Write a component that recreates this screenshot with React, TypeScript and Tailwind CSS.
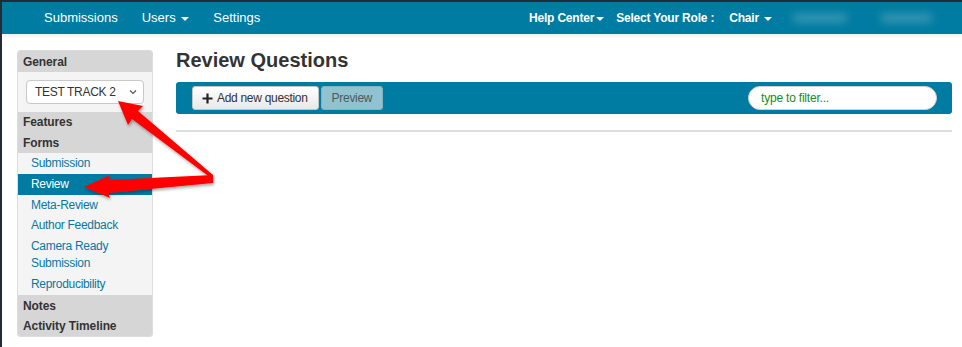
import React from "react";

const headers = "bg-[#d6d6d6] px-[5px] text-[12px] font-bold tracking-[-0.1px] text-[#333]";
const link = "px-[13px] text-[12px] tracking-[-0.3px] leading-[17px] text-[#0a77a1]";

function Caret() {
  return <span className="ml-[2px] inline-block border-x-[4px] border-t-[4px] border-x-transparent border-t-white align-middle" />;
}

function Arrows() {
  return (
    <svg className="pointer-events-none absolute left-0 top-0" width="962" height="347">
      <defs>
        <filter id="sh" x="-20%" y="-20%" width="140%" height="140%">
          <feDropShadow dx="1" dy="2" stdDeviation="1.5" floodColor="#000" floodOpacity="0.35" />
        </filter>
      </defs>
      <g filter="url(#sh)" fill="#ff0000">
        <polygon points="116,99 141,104 136,109 211,173 209,176 130,117 126,123" />
        <polygon points="82,185 108,173 106,178 211,173 211,181 106,191 108,196" />
      </g>
    </svg>
  );
}

export default function App() {
  return (
    <div
      className="relative flex h-[347px] w-[962px] flex-col overflow-hidden border-l-2 border-t-2 border-[#232b38] bg-white"
      style={{ fontFamily: '"Liberation Sans", Arial, sans-serif' }}
    >
      <nav className="flex h-[32px] shrink-0 items-center bg-[#007ba1] text-[13px] text-white shadow-[0_2px_4px_rgba(0,0,0,0.08)]">
        <div className="ml-[42px] flex items-center gap-[24px]">
          <span>Submissions</span>
          <span>
            Users <Caret />
          </span>
          <span>Settings</span>
        </div>
        <div className="ml-auto mr-[29px] flex items-center text-[12px] font-bold tracking-[-0.2px]">
          <span>
            Help Center
            <Caret />
          </span>
          <span className="ml-[12px]">Select Your Role :</span>
          <span className="ml-[15px]">
            Chair <Caret />
          </span>
          <span className="ml-[20px] h-[10px] w-[56px] rounded-full bg-white/20 blur-[4px]" />
          <span className="ml-[32px] h-[10px] w-[53px] rounded-full bg-white/20 blur-[4px]" />
        </div>
      </nav>

      <div className="flex flex-1 items-start pl-[15px] pr-[10px] pt-[16px]">
        <aside className="w-[136px] shrink-0 overflow-hidden rounded-[3px] border border-[#dcdcdc] bg-[#f4f4f4]">
          <div className={`${headers} flex h-[21px] items-center`}>General</div>
          <div className="bg-[#f4f4f4] px-[8px] pb-[8px] pt-[8px]">
            <div className="flex h-[24px] items-center justify-between rounded-[4px] border border-[#c8c8c8] bg-white pl-[8px] pr-[6px] text-[12px] tracking-[-0.3px] text-[#333]">
              <span>TEST TRACK 2</span>
              <svg width="8" height="6" viewBox="0 0 8 6">
                <path d="M1 1.5 L4 4.5 L7 1.5" fill="none" stroke="#555" strokeWidth="1.2" />
              </svg>
            </div>
          </div>
          <div className={`${headers} flex h-[20px] items-center`}>Features</div>
          <div className={`${headers} flex h-[21px] items-center`}>Forms</div>
          <div className={`${link} flex h-[21px] items-center`}>Submission</div>
          <div className={`${link} flex h-[21px] items-center bg-[#007ba1] text-white`}>Review</div>
          <div className={`${link} flex h-[20px] items-center`}>Meta-Review</div>
          <div className={`${link} flex h-[21px] items-center`}>Author Feedback</div>
          <div className={`${link} py-[2px]`}>
            Camera Ready
            <br />
            Submission
          </div>
          <div className={`${link} flex h-[21px] items-center`}>Reproducibility</div>
          <div className={`${headers} flex h-[21px] items-center`}>Notes</div>
          <div className={`${headers} flex h-[20px] items-center`}>Activity Timeline</div>
        </aside>

        <main className="ml-[23px] flex-1">
          <h1 className="-mt-[2px] text-[20px] font-bold leading-[24px] text-[#333]">Review Questions</h1>
          <div className="mt-[10px] flex h-[32px] items-center rounded-[3px] bg-[#007ba1] pl-[16px] pr-[15px]">
            <button className="flex h-[24px] items-center gap-[4px] rounded-[3px] border border-[#c4c4c4] bg-gradient-to-b from-white to-[#e8e8e8] pl-[9px] pr-[10px] text-[12px] tracking-[-0.3px] text-[#333]">
              <svg width="11" height="11" viewBox="0 0 11 11">
                <path d="M5.5 0.5 V10.5 M0.5 5.5 H10.5" stroke="#222" strokeWidth="2.2" />
              </svg>
              Add new question
            </button>
            <button className="ml-[2px] h-[24px] rounded-[3px] border border-[#7fb2c2] bg-[#91c2cf] px-[10px] text-[12px] tracking-[-0.3px] text-[#4a5a60]">
              Preview
            </button>
            <div className="ml-auto flex h-[24px] w-[189px] items-center rounded-full border border-[#cfcfcf] bg-white pl-[12px] text-[12px] tracking-[-0.2px] text-[#208a20]">
              type to filter...
            </div>
          </div>
          <div className="mt-[16px] h-[2px] bg-[#dedede]" />
        </main>
      </div>
      <Arrows />
    </div>
  );
}
